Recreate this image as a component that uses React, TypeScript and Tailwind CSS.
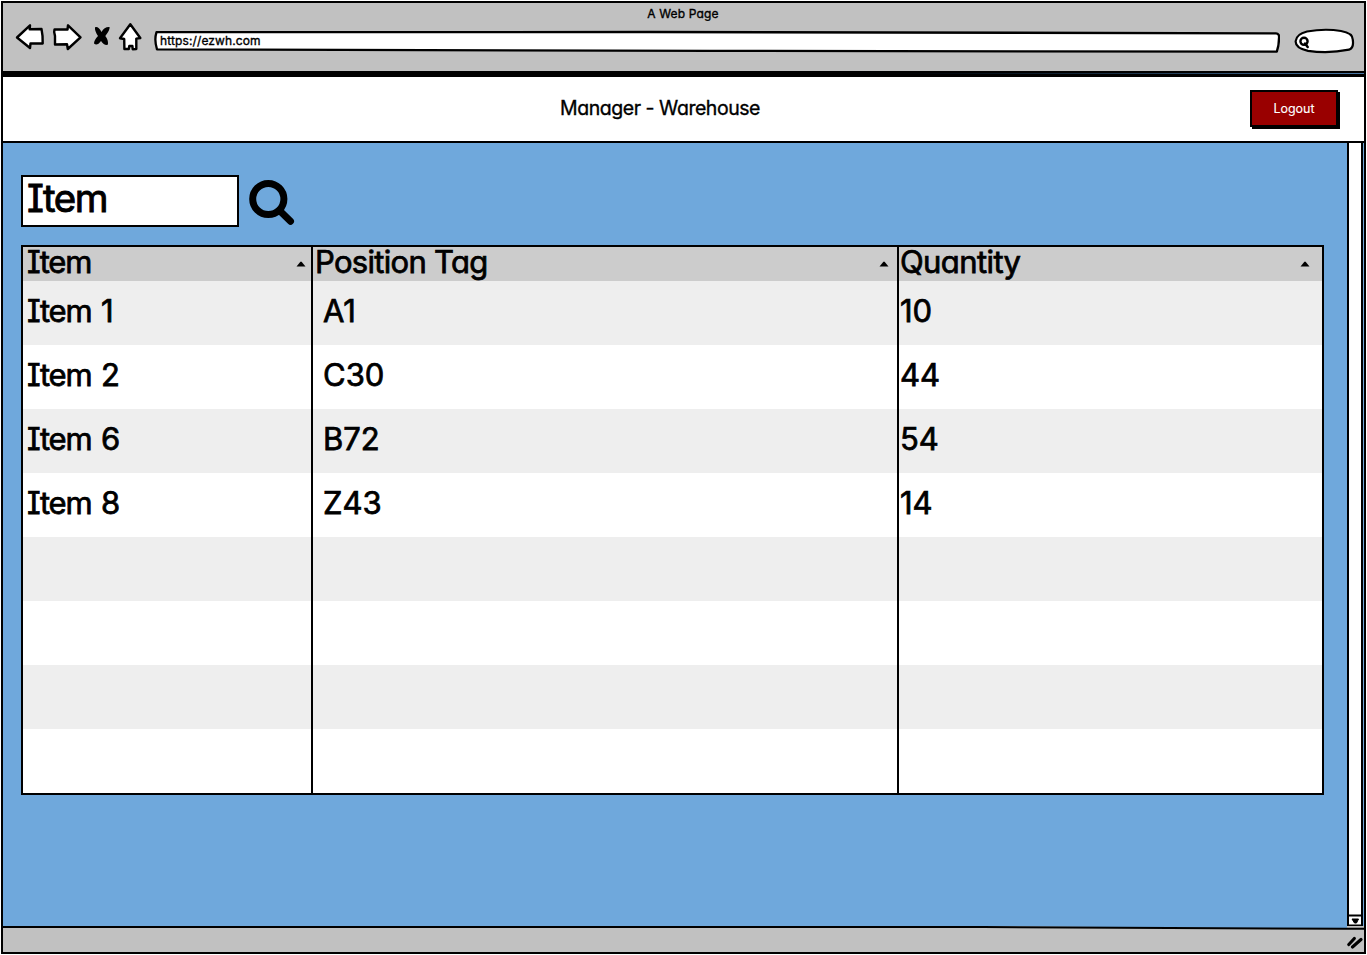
import React from "react";

type Row = { item: string; tag: string; qty: string };

const rows: Row[] = [
  { item: "Item 1", tag: "A1", qty: "10" },
  { item: "Item 2", tag: "C30", qty: "44" },
  { item: "Item 6", tag: "B72", qty: "54" },
  { item: "Item 8", tag: "Z43", qty: "14" },
  { item: "", tag: "", qty: "" },
  { item: "", tag: "", qty: "" },
  { item: "", tag: "", qty: "" },
  { item: "", tag: "", qty: "" },
];

function SortArrow() {
  return (
    <svg className="mt-[14px] h-[6px] w-[10px] shrink-0" viewBox="0 0 10 6">
      <path d="M0.5 5.5 L4.2 1 Q5 0.2 5.8 1 L9.5 5.5 Z" fill="#000" />
    </svg>
  );
}

function BrowserBar() {
  return (
    <header className="flex h-[68px] shrink-0 flex-col bg-[#c1c1c1]">
      <div className="pt-px pr-px text-center text-[12px] leading-[20px] tracking-[0.15px]">A Web Page</div>
      <div className="-mt-px flex pl-px">
        <svg className="h-[46px] w-[146px] shrink-0" viewBox="4 23 146 46" fill="#fff" stroke="#000" strokeWidth="2.4" strokeLinejoin="round" strokeLinecap="round">
          <path d="M17 37.5 L30 25.3 L29.7 29.3 L41.5 29 Q43 36 42.7 43.5 L30.5 43.5 L30 48 Z" />
          <path d="M80.5 37.3 L68 25.3 L67.5 29.5 L54.5 29.5 Q53.5 32 55 36 L55 44.5 L67 44.2 L67.8 49 Z" />
          <path d="M130.3 24.3 L140.3 38 L136.3 38.6 L136.3 49 L132.7 49.2 L132.4 46 L129.3 46 L128.8 49 L124.4 49 L124.2 39 L120 38.2 Z" />
          <path fill="#000" stroke="none" d="M95 27.3 Q98.3 26 101.5 32 Q104.5 26.5 109.6 27 Q110 30 105.3 36 Q108.5 40 108 44.6 Q104.5 46 101 41 Q97 46.5 94 43.5 Q94 40 98 36 Q94.5 31 95 27.3 Z" />
        </svg>
        <div className="relative mt-[7px] h-[23px] w-[1130px] shrink-0">
          <svg className="absolute inset-0 h-full w-full" viewBox="0 0 1130 23" fill="#fff" stroke="#000" strokeWidth="2.3" strokeLinejoin="round">
            <path d="M6.5 2.2 L500 2 L1126 3.3 Q1129.5 3.4 1129 8 Q1129 15 1126.8 21.7 L560 20.8 L7 19.4 Q4 10 6.5 2.2 Z" />
          </svg>
          <span className="absolute top-[2px] left-[10px] text-[12px] leading-[18px] tracking-[0.12px]">https://ezwh.com</span>
        </div>
        <svg className="mt-[4px] ml-[13px] h-[27px] w-[63px] shrink-0" viewBox="1293 27 63 27" fill="none" stroke="#000" strokeWidth="2.2" strokeLinejoin="round">
          <path fill="#fff" d="M1307 31.5 Q1325 28.3 1341 31 Q1353 33 1352.8 40 Q1354 48 1349 49.7 Q1328 54 1308 50.8 Q1295 48 1295.7 41 Q1296.5 34 1307 31.5 Z" />
          <circle cx="1304" cy="41.3" r="3.6" strokeWidth="2.4" />
          <path d="M1305 43.5 L1307.7 47" strokeWidth="2.5" strokeLinecap="round" />
        </svg>
      </div>
    </header>
  );
}

function TitleBar() {
  return (
    <div className="flex h-[69px] shrink-0 items-start border-t-[3px] border-b-2 border-black bg-white">
      <h1 className="ml-[557px] w-[202px] pt-[17px] text-[19.5px] leading-[28px] tracking-[-0.45px] whitespace-nowrap">Manager - Warehouse</h1>
      <button className="mt-[13px] ml-[488px] flex h-[37px] w-[88px] items-center justify-center border-2 border-black bg-[#990000] pt-px text-[12.5px] text-white shadow-[2px_2px_0_#000] [-webkit-text-stroke:0.1px]">
        Logout
      </button>
    </div>
  );
}

function ItemTable() {
  return (
    <div className="mt-[18px] flex h-[550px] w-[1303px] flex-col border-2 border-black bg-white text-[31px] [-webkit-text-stroke:0.75px_currentColor]">
      <div className="grid h-[34px] shrink-0 grid-cols-[290px_586px_1fr] bg-[#cccccc] leading-[30px]">
        <div className="flex justify-between border-r-2 border-black pr-[5px] pl-[4px]">
          <span className="tracking-[-1.3px]">Item</span>
          <SortArrow />
        </div>
        <div className="flex justify-between border-r-2 border-black pr-[8px] pl-[2px]">
          <span className="tracking-[-0.7px]">Position Tag</span>
          <SortArrow />
        </div>
        <div className="flex justify-between pr-[12px] pl-px">
          <span className="tracking-[-0.6px]">Quantity</span>
          <SortArrow />
        </div>
      </div>
      {rows.map((row, i) => (
        <div key={i} className="grid h-16 shrink-0 grid-cols-[290px_586px_1fr] leading-[60px] odd:bg-white even:bg-[#eeeeee]">
          <div className="border-r-2 border-black pl-[4px] tracking-[-1.2px] [word-spacing:2px]">{row.item}</div>
          <div className="border-r-2 border-black pl-[10px]">{row.tag}</div>
          <div className="pl-px">{row.qty}</div>
        </div>
      ))}
    </div>
  );
}

export default function App() {
  return (
    <div className="h-[955px] w-[1367px] overflow-hidden bg-white pt-px pl-px font-['Inter',sans-serif] text-black [font-feature-settings:'cv11','cv08','ss03'] [-webkit-text-stroke:0.35px_currentColor]">
      <div className="flex h-[953px] w-[1365px] flex-col border-2 border-black">
        <BrowserBar />
        <div className="h-[2px] shrink-0 bg-black" />
        <div className="h-px shrink-0 bg-gradient-to-r from-black from-60% to-[#4a78a6]" />
        <TitleBar />
        <main className="flex h-[783px] shrink-0 bg-[#6fa8dc]">
          <div className="flex-1 pt-[32px] pl-[18px]">
            <div className="flex">
              <div className="h-[52px] w-[218px] border-2 border-black bg-white pl-[4px] text-[38.5px] leading-[43px] tracking-[-1.5px] [-webkit-text-stroke:0.9px_currentColor]">Item</div>
              <svg className="mt-[4px] ml-[9px] h-[48px] w-[48px]" viewBox="248 179 48 48" fill="none" stroke="#000" strokeWidth="7" strokeLinecap="round">
                <circle cx="268.3" cy="199" r="15.6" />
                <path d="M280 211 L290.5 221.3" />
              </svg>
            </div>
            <ItemTable />
          </div>
          <div className="mr-px flex w-[16px] flex-col border-x-2 border-black bg-white">
            <div className="flex-1" />
            <svg className="h-[13px] w-[12px]" viewBox="0 0 12 13">
              <path d="M0 2.5 H12 M0 12.5 H12" stroke="#000" strokeWidth="1.8" />
              <path d="M3 6 H9.5 L7.5 10 H5.5 Z" fill="#000" stroke="#000" strokeLinejoin="round" />
            </svg>
          </div>
        </main>
        <footer className="flex flex-1 items-start justify-between bg-[#c1c1c1]">
          <svg className="h-[4px] w-[1344px]" viewBox="0 0 1344 4" preserveAspectRatio="none">
            <path d="M980 0 H1344 V3 Z" fill="#6fa8dc" />
            <path d="M0 1 H980 L1344 2.8" fill="none" stroke="#000" strokeWidth="2" />
          </svg>
          <svg className="h-[24px] w-[17px]" viewBox="1345 927 17 24" fill="none" stroke="#000" strokeLinecap="round">
            <path d="M1344 929.8 H1362" strokeWidth="2" />
            <path d="M1346.8 945.5 L1352.3 939.5 M1350.5 948 L1359 940.5" strokeWidth="3.1" />
          </svg>
        </footer>
      </div>
    </div>
  );
}
